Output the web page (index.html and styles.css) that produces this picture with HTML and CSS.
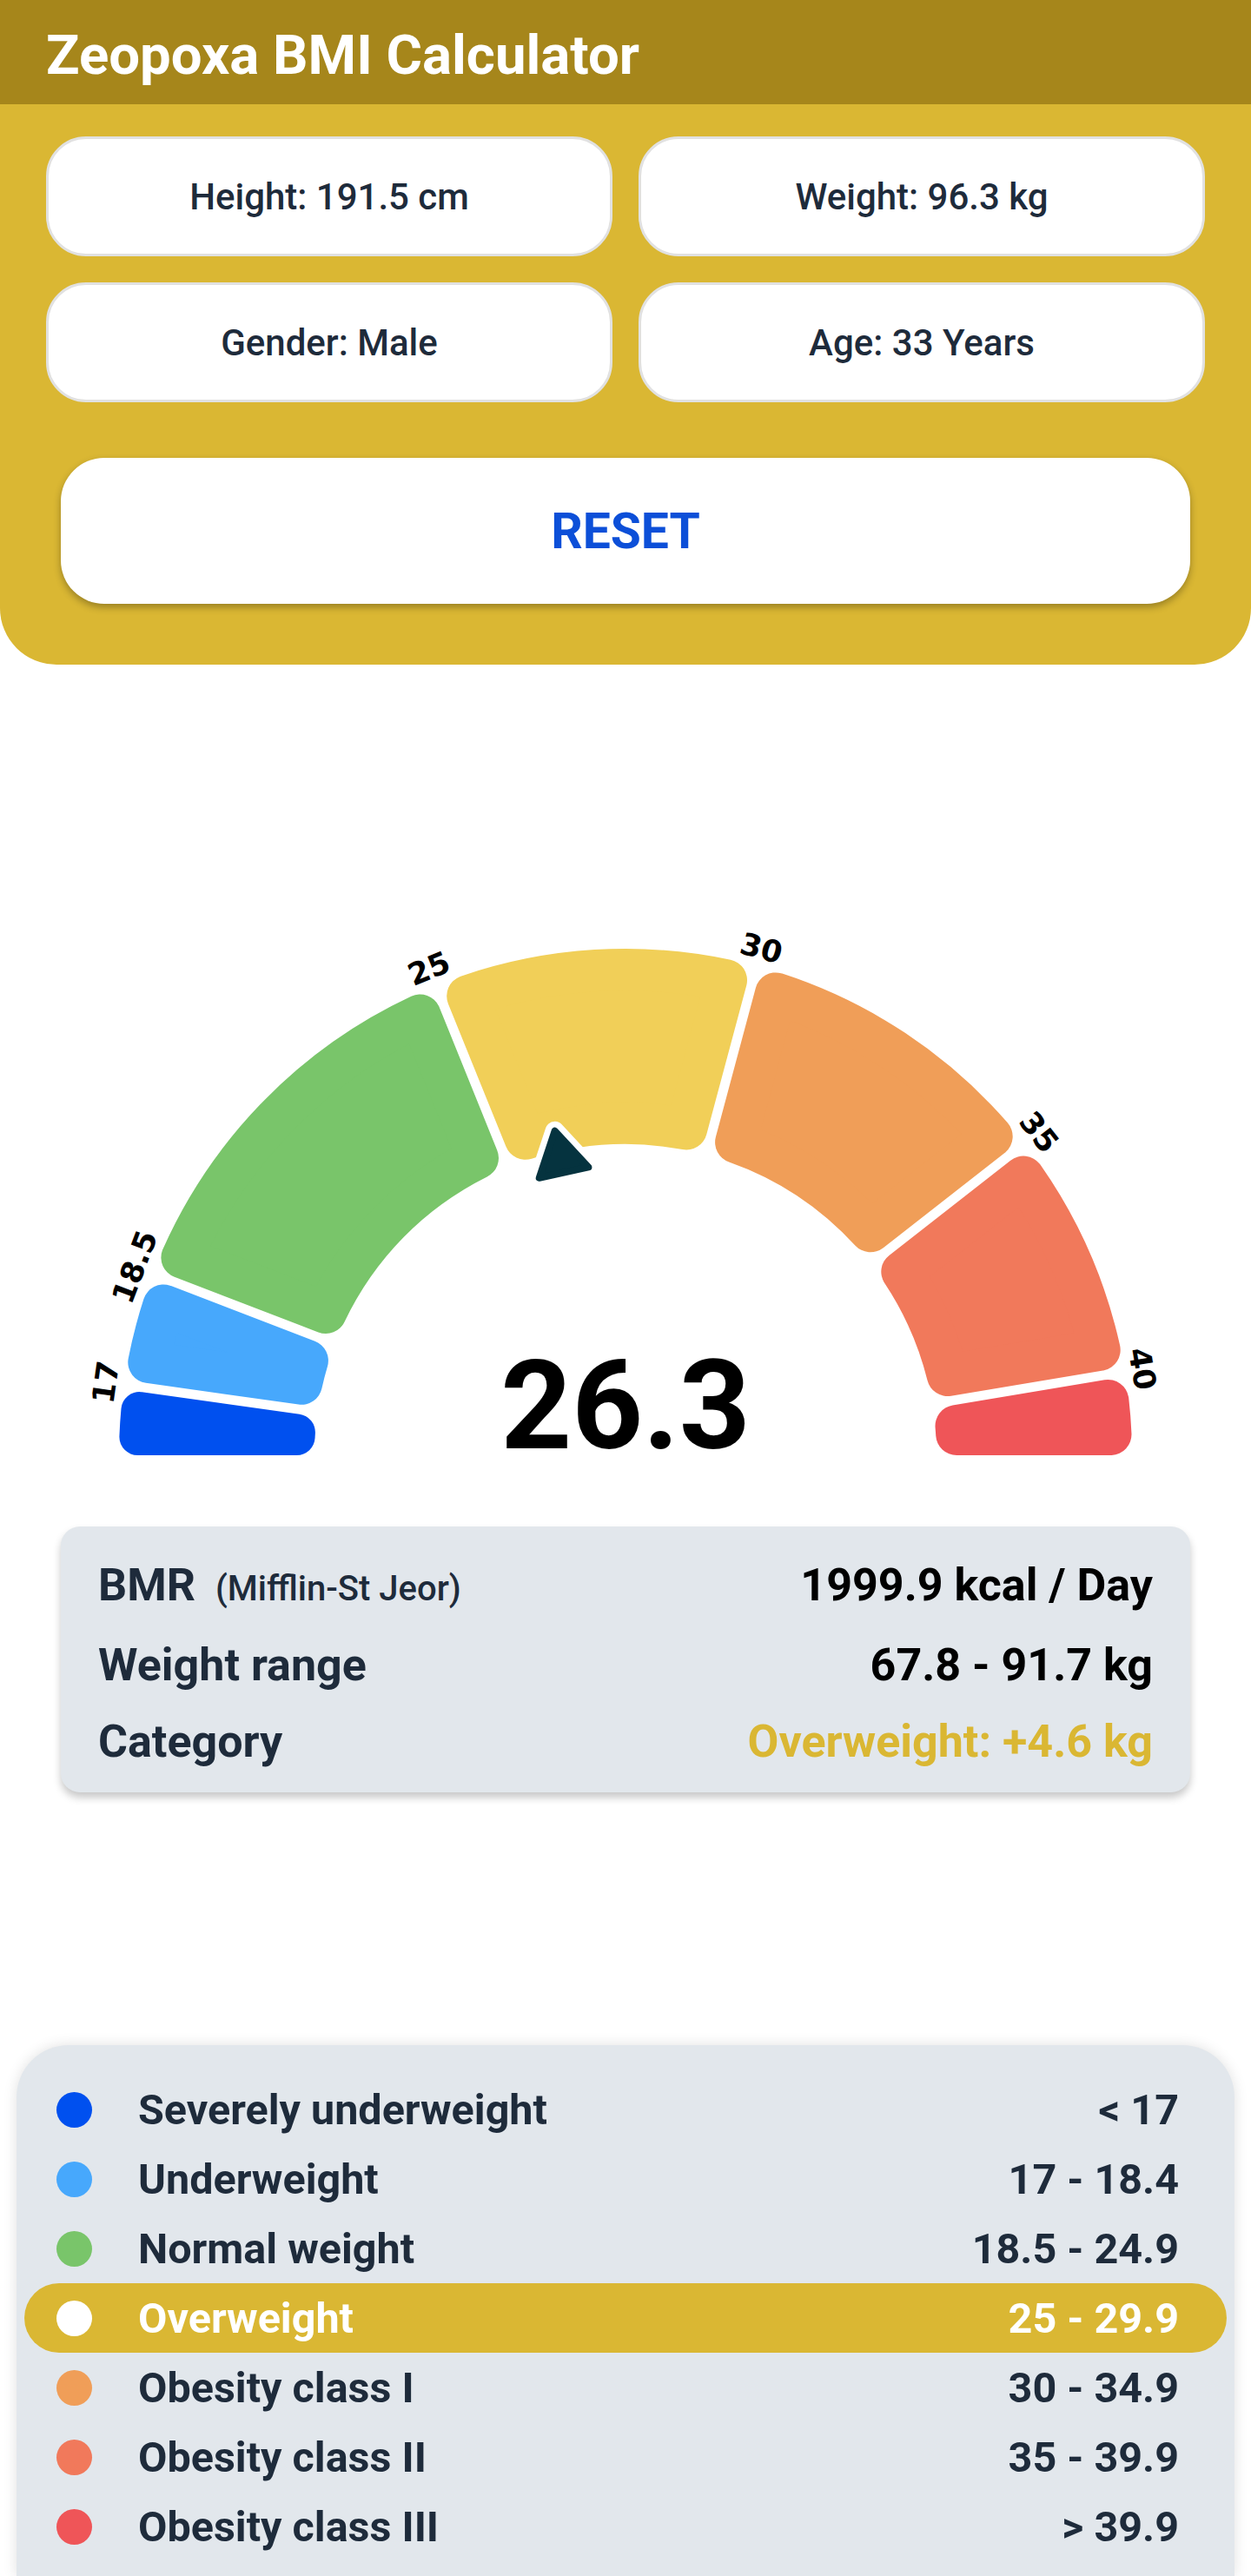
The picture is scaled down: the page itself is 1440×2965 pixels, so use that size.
FILE: index.html
```html
<!DOCTYPE html>
<html lang="en">
<head>
    <meta charset="UTF-8">
    <meta name="viewport" content="width=device-width, initial-scale=1.0">
    <title>Zeopoxa BMI Calculator</title>
    <link rel="stylesheet" href="styles.css">
</head>
<body>
    <header class="topbar">
        <h1>Zeopoxa BMI Calculator</h1>
    </header>

    <section class="inputs">
        <div class="field-grid">
            <div class="field">Height: 191.5 cm</div>
            <div class="field">Weight: 96.3 kg</div>
            <div class="field">Gender: Male</div>
            <div class="field">Age: 33 Years</div>
        </div>
        <button class="reset">RESET</button>
    </section>

    <!-- Gauge: centre of the arc sits at (720, 910) inside the svg -->
    <svg class="gauge" viewBox="0 0 1440 992" width="1440" height="992">
        <g transform="translate(720 910)">
            <g id="segments"></g>
            <g class="ticks">
                <text transform="rotate(-82) translate(0 -604)">17</text>
                <text transform="rotate(-69) translate(0 -605)">18.5</text>
                <text transform="rotate(-22) translate(0 -604)">25</text>
                <text transform="rotate(15) translate(0 -604)">30</text>
                <text transform="rotate(52) translate(0 -604)">35</text>
                <text transform="rotate(80.5) translate(0 -603)">40</text>
            </g>
            <g class="pointer" transform="rotate(-12.3)">
                <polygon class="pointer-halo" points="0,-382 -29,-333 29,-333"/>
                <polygon class="pointer-body" points="0,-382 -29,-333 29,-333"/>
            </g>
        </g>
        <text class="bmi-value" x="720" y="902">26.3</text>
    </svg>

    <section class="summary">
        <div class="summary-row">
            <span>BMR <small>(Mifflin-St Jeor)</small></span>
            <span class="value">1999.9 kcal / Day</span>
        </div>
        <div class="summary-row">
            <span>Weight range</span>
            <span class="value">67.8 - 91.7 kg</span>
        </div>
        <div class="summary-row">
            <span>Category</span>
            <span class="value overweight">Overweight: +4.6 kg</span>
        </div>
    </section>

    <ul class="legend">
        <li><span class="dot sev"></span>Severely underweight<span class="range">&lt; 17</span></li>
        <li><span class="dot under"></span>Underweight<span class="range">17 - 18.4</span></li>
        <li><span class="dot normal"></span>Normal weight<span class="range">18.5 - 24.9</span></li>
        <li class="current"><span class="dot"></span>Overweight<span class="range">25 - 29.9</span></li>
        <li><span class="dot ob1"></span>Obesity class I<span class="range">30 - 34.9</span></li>
        <li><span class="dot ob2"></span>Obesity class II<span class="range">35 - 39.9</span></li>
        <li><span class="dot ob3"></span>Obesity class III<span class="range">&gt; 39.9</span></li>
    </ul>

    <script>
        // [start angle, end angle, colour, corner radius]
        var segments = [
            [180, 172, '#0050ef', 21],
            [172, 159, '#47a8fc', 24],
            [159, 112, '#79c56a', 24],
            [112, 75, '#f1cf58', 24],
            [75, 38, '#f09e58', 24],
            [38, 9.5, '#f1795b', 24],
            [9.5, 0, '#ef5558', 24]
        ];
        var R_IN = 358, R_OUT = 583, GAP = 11;

        // point on a radial edge, pushed d px into the segment
        function corner(angle, rho, d, side) {
            var t = angle * Math.PI / 180;
            var ux = Math.cos(t), uy = Math.sin(t);
            var nx = side * uy, ny = -side * ux;
            var s = Math.sqrt(rho * rho - d * d);
            var x = s * ux + d * nx, y = s * uy + d * ny;
            return x.toFixed(1) + ' ' + (-y).toFixed(1);
        }

        var group = document.getElementById('segments');
        segments.forEach(function (seg) {
            var a = seg[0], b = seg[1], r = seg[3];
            var da = r + (a === 180 ? 0 : GAP / 2);
            var db = r + (b === 0 ? 0 : GAP / 2);
            var ro = R_OUT - r, ri = R_IN + r;
            var d = 'M' + corner(a, ro, da, 1) +
                ' A' + ro + ' ' + ro + ' 0 0 1 ' + corner(b, ro, db, -1) +
                ' L' + corner(b, ri, db, -1) +
                ' A' + ri + ' ' + ri + ' 0 0 0 ' + corner(a, ri, da, 1) + ' Z';
            var path = document.createElementNS('http://www.w3.org/2000/svg', 'path');
            path.setAttribute('d', d);
            path.setAttribute('fill', seg[2]);
            path.setAttribute('stroke', seg[2]);
            path.setAttribute('stroke-width', r * 2);
            path.setAttribute('stroke-linejoin', 'round');
            group.appendChild(path);
        });
    </script>
</body>
</html>
```

FILE: styles.css
```css
body {
    margin: 0;
    font-family: Roboto, "Noto Sans", sans-serif;
    color: #1e2b3b;
    background: #fff;
}

.topbar {
    height: 120px;
    box-sizing: border-box;
    padding: 8px 0 0 53px;
    background: #a6861b;
}
.topbar h1 {
    margin: 0;
    font-size: 63.5px;
    font-weight: 700;
    line-height: 112px;
    color: #fff;
}

.inputs {
    padding: 37px 53px 70px;
    background: #dab733;
    border-radius: 0 0 65px 65px;
}
.field-grid {
    display: grid;
    grid-template-columns: 1fr 1fr;
    gap: 30px;
}
.field {
    height: 138px;
    box-sizing: border-box;
    display: flex;
    align-items: center;
    justify-content: center;
    background: #fff;
    border: 3px solid #e1e1e1;
    border-radius: 46px;
    font-size: 42px;
    font-weight: 500;
}
.reset {
    display: block;
    width: calc(100% - 34px);
    height: 168px;
    margin: 64px auto 0;
    border: none;
    border-radius: 50px;
    background: #fff;
    color: #0c4fd8;
    font-family: Roboto, sans-serif;
    font-size: 57px;
    font-weight: 700;
    box-shadow: 0 4px 8px rgba(0, 0, 0, 0.3);
}

/* gauge */
.gauge {
    display: block;
}
.ticks text {
    font-family: "DejaVu Sans", sans-serif;
    font-weight: 700;
    font-size: 35px;
    fill: #000;
    text-anchor: middle;
    dominant-baseline: central;
}
.pointer-halo {
    fill: #fff;
    stroke: #fff;
    stroke-width: 22;
    stroke-linejoin: round;
}
.pointer-body {
    fill: #05333f;
    stroke: #05333f;
    stroke-width: 8;
    stroke-linejoin: round;
}
.bmi-value {
    font-family: Roboto, sans-serif;
    font-weight: 700;
    font-size: 143px;
    fill: #000;
    text-anchor: middle;
}

/* summary card */
.summary {
    margin: 0 70px;
    padding: 24px 43px 14px;
    background: #e2e7ec;
    border-radius: 22px;
    box-shadow: 0 6px 10px rgba(0, 0, 0, 0.22);
}
.summary-row {
    display: flex;
    justify-content: space-between;
    align-items: baseline;
    font-size: 52px;
    font-weight: 700;
    line-height: 88px;
}
.summary-row small {
    margin-left: 10px;
    font-size: 40px;
    font-weight: 500;
}
.summary-row .value {
    color: #000;
}
.summary-row .overweight {
    color: #dab733;
}

/* legend */
.legend {
    list-style: none;
    margin: 291px 19px 0;
    padding: 34px 9px 18px;
    background: #e2e7ec;
    border-radius: 60px 60px 0 0;
    box-shadow: 0 0 16px rgba(0, 0, 0, 0.12);
}
.legend li {
    display: flex;
    align-items: center;
    height: 80px;
    padding: 0 55px 0 37px;
    border-radius: 40px;
    font-size: 48.5px;
    font-weight: 700;
}
.legend .range {
    margin-left: auto;
}
.dot {
    flex: none;
    width: 41px;
    height: 41px;
    margin-right: 53px;
    border-radius: 50%;
}
.dot.sev { background: #0050ef; }
.dot.under { background: #47a8fc; }
.dot.normal { background: #79c56a; }
.dot.ob1 { background: #f09e58; }
.dot.ob2 { background: #f1795b; }
.dot.ob3 { background: #ef5558; }

.legend li.current {
    background: #dab733;
    color: #fff;
}
.legend li.current .dot {
    background: #fff;
}
```
